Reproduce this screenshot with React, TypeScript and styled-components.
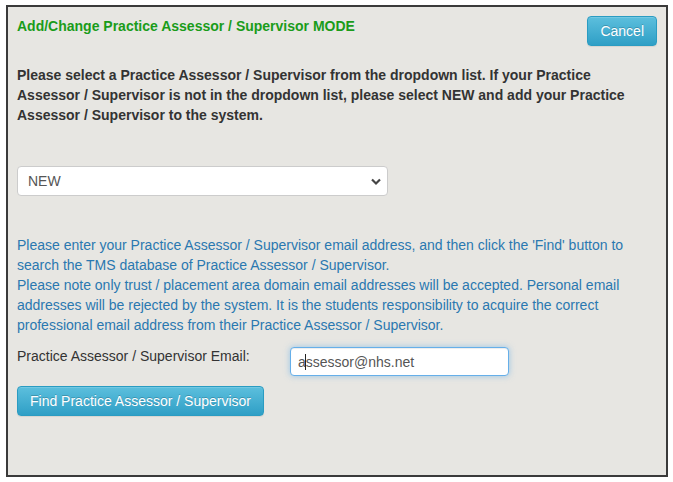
import React from "react";
import styled, { createGlobalStyle } from "styled-components";

const Global = createGlobalStyle`
  html, body { margin: 0; padding: 0; background: #ffffff; }
  body { font-family: "Liberation Sans", Arial, sans-serif; font-size: 14px; line-height: 20px; color: #333; }
  * { box-sizing: border-box; }
`;

const Panel = styled.div`
  margin: 5px 0 0 6px;
  width: 662px;
  height: 472px;
  border: 2px solid #3a3a3a;
  background: #e7e6e2;
  padding: 9px;
  display: flex;
  flex-direction: column;
`;

const Header = styled.div`
  display: flex;
  justify-content: space-between;
  align-items: flex-start;
`;

const Title = styled.div`
  color: #1a9c1a;
  font-weight: bold;
  font-size: 14px;
  line-height: 20px;
`;

const Btn = styled.button`
  font-family: "Liberation Sans", Arial, sans-serif;
  font-size: 14px;
  line-height: 20px;
  color: #fff;
  padding: 4px 12px;
  height: 30px;
  border: 1px solid #2a9cc2;
  border-radius: 4px;
  background-image: linear-gradient(to bottom, #5cbfdd 0, #2f9fc6 100%);
  text-shadow: 0 -1px 0 rgba(0, 0, 0, 0.2);
  box-shadow: inset 0 1px 0 rgba(255, 255, 255, 0.15), 0 1px 1px rgba(0, 0, 0, 0.075);
  cursor: pointer;
  align-self: flex-start;
`;

const Intro = styled.p`
  margin: 19px 0 0;
  font-weight: bold;
  color: #333;
  max-width: 636px;
`;

const SelectWrap = styled.div`
  position: relative;
  margin-top: 41px;
  width: 371px;
  height: 30px;
`;

const Select = styled.select`
  appearance: none;
  -webkit-appearance: none;
  width: 100%;
  height: 100%;
  border: 1px solid #ccc;
  border-radius: 4px;
  background: #fff;
  padding: 0 30px 0 10px;
  font-family: "Liberation Sans", Arial, sans-serif;
  font-size: 14px;
  color: #555;
`;

const Chevron = styled.svg`
  position: absolute;
  right: 6px;
  top: 11px;
  pointer-events: none;
`;

const Info = styled.p`
  margin: 39px 0 0;
  color: #2a78b0;
`;

const EmailRow = styled.div`
  display: flex;
  align-items: flex-start;
  margin-top: 11px;
`;

const Label = styled.label`
  width: 273px;
  color: #333;
`;

const InputWrap = styled.div`
  position: relative;
  margin-top: 1px;
`;

const Input = styled.input`
  width: 219px;
  height: 29px;
  border: 1px solid #66afe9;
  border-radius: 4px;
  background: #fff;
  padding: 0 7px;
  font-family: "Liberation Sans", Arial, sans-serif;
  font-size: 14px;
  color: #555;
  outline: none;
  box-shadow: inset 0 1px 1px rgba(0, 0, 0, 0.075), 0 0 6px rgba(102, 175, 233, 0.6);
`;

const Caret = styled.span`
  position: absolute;
  left: 15px;
  top: 7px;
  width: 1px;
  height: 16px;
  background: #222;
`;

const FindRow = styled.div`
  margin-top: 10px;
`;

export default function App() {
  return (
    <>
      <Global />
      <Panel>
        <Header>
          <Title>Add/Change Practice Assessor / Supervisor MODE</Title>
          <Btn>Cancel</Btn>
        </Header>
        <Intro>
          Please select a Practice Assessor / Supervisor from the dropdown list. If your Practice
          Assessor / Supervisor is not in the dropdown list, please select NEW and add your Practice
          Assessor / Supervisor to the system.
        </Intro>
        <SelectWrap>
          <Select defaultValue="NEW">
            <option value="NEW">NEW</option>
          </Select>
          <Chevron width="12" height="9" viewBox="0 0 12 9">
            <path d="M2 2.5 L6 6.5 L10 2.5" fill="none" stroke="#444" strokeWidth="2.2" />
          </Chevron>
        </SelectWrap>
        <Info>
          Please enter your Practice Assessor / Supervisor email address, and then click the 'Find' button to
          search the TMS database of Practice Assessor / Supervisor.
          <br />
          Please note only trust / placement area domain email addresses will be accepted. Personal email
          addresses will be rejected by the system. It is the students responsibility to acquire the correct
          professional email address from their Practice Assessor / Supervisor.
        </Info>
        <EmailRow>
          <Label>Practice Assessor / Supervisor Email:</Label>
          <InputWrap>
            <Input defaultValue="assessor@nhs.net" />
            <Caret />
          </InputWrap>
        </EmailRow>
        <FindRow>
          <Btn>Find Practice Assessor / Supervisor</Btn>
        </FindRow>
      </Panel>
    </>
  );
}
